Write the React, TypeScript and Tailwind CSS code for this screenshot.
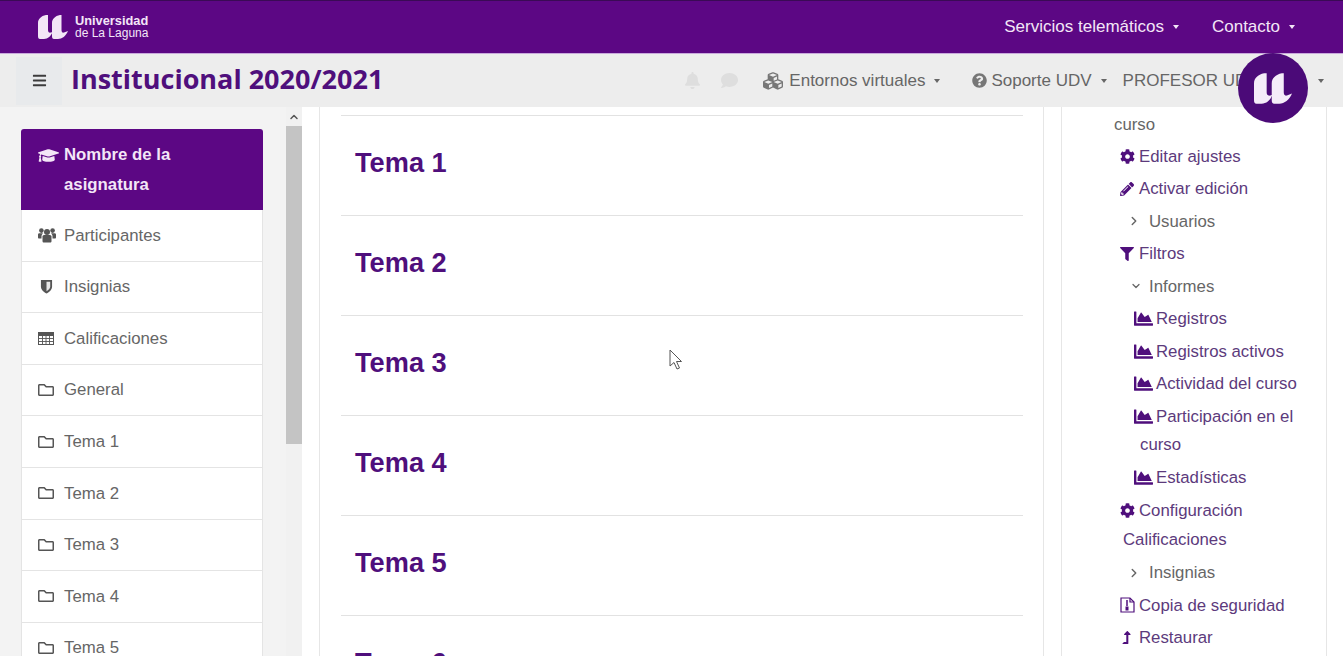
import type { ReactNode } from 'react';
import {
  FaBell,
  FaComment,
  FaCubes,
  FaQuestionCircle,
  FaBars,
  FaGraduationCap,
  FaRegFolder,
  FaCog,
  FaPencilAlt,
  FaFilter,
  FaChartArea,
  FaLevelUpAlt,
} from 'react-icons/fa';
import { LuChevronRight, LuChevronDown, LuChevronUp } from 'react-icons/lu';

function LogoMark({ className }: { className: string }) {
  return (
    <svg viewBox="0 0 30 24" className={className} fill="currentColor">
      <path d="M0 8 C0 4 3 1 8 0 L10 0 L10 15 C10 17 11 18 13 17.5 L14.5 17 C13 21 10 24 6 24 L2 24 C0.5 24 0 23 0 21 Z" />
      <path d="M14 8 C14 4 17 1 22 0 L23.5 0 L23.5 15 C23.5 17 24.5 18 26 17.5 L30 16 C28 21 24 24 20 24 L16 24 C14.5 24 14 23 14 21 Z" />
    </svg>
  );
}

function Caret() {
  return <span className="ml-[9px] inline-block h-0 w-0 border-x-[3.5px] border-t-[4px] border-x-transparent border-t-current" />;
}

function UsersIcon() {
  return (
    <svg viewBox="0 0 18 16" className="h-4 w-[18px]" fill="currentColor">
      <circle cx="9" cy="5" r="3" />
      <circle cx="3.4" cy="3.6" r="2.3" />
      <circle cx="14.6" cy="3.6" r="2.3" />
      <path d="M4.5 9.5 C4.5 8.5 5.5 8 6.5 8 L11.5 8 C12.5 8 13.500 8.500 13.500 9.500 L13.500 14 C13.500 15 13 15.500 12 15.500 L6 15.500 C5 15.500 4.500 15 4.500 14 Z" />
      <path d="M0 7.500 C0 6.800 0.800 6.300 1.500 6.300 L5 6.300 C4 7.300 3.500 8.300 3.500 9.500 L3.500 11.500 L1 11.500 C0.400 11.500 0 11 0 10.500 Z" />
      <path d="M18 7.500 C18 6.800 17.200 6.300 16.500 6.300 L13 6.300 C14 7.300 14.500 8.300 14.500 9.500 L14.500 11.500 L17 11.500 C17.600 11.500 18 11 18 10.500 Z" />
    </svg>
  );
}

function ShieldIcon() {
  return (
    <svg viewBox="0 0 14 16" className="ml-[2px] h-[15px] w-[13px]">
      <path d="M1 1 L13 1 L13 8 C13 11.500 10 14 7 15.500 C4 14 1 11.500 1 8 Z" fill="#555" />
      <path d="M7 3 L11 3 L11 8 C11 10.300 9 11.900 7 13 Z" fill="#e8e8e8" />
    </svg>
  );
}

function TableIcon() {
  return (
    <svg viewBox="0 0 16 13" className="mt-[1px] h-[13px] w-4" fill="none" stroke="currentColor">
      <rect x="0.500" y="0.500" width="15" height="12" fill="none" />
      <rect x="0.500" y="0.500" width="15" height="3" fill="currentColor" />
      <path d="M0.500 6.500 H15.500 M0.500 9.500 H15.500 M4.500 3.500 V12.500 M8 3.500 V12.500 M11.500 3.500 V12.500" strokeWidth="0.900" />
    </svg>
  );
}

function ArchiveIcon() {
  return (
    <svg viewBox="0 0 15 16" className="h-4 w-[15px]" fill="none" stroke="currentColor" strokeWidth="1.200">
      <path d="M1 1 L10 1 L14 5 L14 15 L1 15 Z" />
      <path d="M10 1 L10 5 L14 5" />
      <path d="M7 3 L7 9" strokeWidth="1.500" />
      <rect x="5.500" y="9.500" width="3" height="4" fill="currentColor" stroke="none" />
    </svg>
  );
}

const folder = <FaRegFolder className="h-4 w-4" />;

const sideItems: { label: string; icon: ReactNode }[] = [
  { label: 'Participantes', icon: <UsersIcon /> },
  { label: 'Insignias', icon: <ShieldIcon /> },
  { label: 'Calificaciones', icon: <TableIcon /> },
  { label: 'General', icon: folder },
  { label: 'Tema 1', icon: folder },
  { label: 'Tema 2', icon: folder },
  { label: 'Tema 3', icon: folder },
  { label: 'Tema 4', icon: folder },
  { label: 'Tema 5', icon: folder },
];

function Sidebar() {
  return (
    <aside className="flex w-[286px] shrink-0 flex-col bg-[#f3f3f3] pl-[21px] pt-[22px]">
      <div className="w-[242px]">
        <div className="flex h-[81px] rounded-t-[3px] bg-[#5c0784] pl-[17px] pt-[11px] text-[16.8px] font-bold leading-[30px] text-[#f3e6f7]">
          <FaGraduationCap className="mr-[5px] mt-[6px] h-[19px] w-[21px] shrink-0" />
          <span className="w-[140px]">Nombre de la asignatura</span>
        </div>
        {sideItems.map((item) => (
          <div
            key={item.label}
            className="flex h-[51.6px] items-center border-x border-b border-[#e4e4e4] bg-white pl-[16px] text-[16.8px] text-[#666666]"
          >
            <span className="flex w-[26px] shrink-0 text-[#555555]">{item.icon}</span>
            {item.label}
          </div>
        ))}
      </div>
    </aside>
  );
}

function Scrollbar() {
  return (
    <div className="flex w-[16px] shrink-0 flex-col bg-[#f1f1f1]">
      <div className="flex h-[19px] items-center justify-center text-[#555555]">
        <LuChevronUp className="h-3 w-3" strokeWidth={3} />
      </div>
      <div className="h-[318px] bg-[#c4c4c4]" />
    </div>
  );
}

function Course() {
  const temas = ['Tema 1', 'Tema 2', 'Tema 3', 'Tema 4', 'Tema 5', 'Tema 6'];
  return (
    <div className="flex min-w-0 flex-1 justify-start bg-white pl-[17px]">
      <section className="w-[726px] border-x border-[#e6e6e6] pl-[21px] pr-[20px] pt-[8px]">
        {temas.map((t) => (
          <div key={t} className="h-[100px] border-t border-[#e2e2e2] pl-[14px] pt-[29px] text-[27.2px] font-bold leading-[36px] text-[#4f0f7c]">
            {t}
          </div>
        ))}
      </section>
    </div>
  );
}

function AdminLink({ icon, children, className = '' }: { icon: ReactNode; children: ReactNode; className?: string }) {
  return (
    <div className={`flex h-[32.5px] items-center text-[#5c3a7c] ${className}`}>
      <span className="flex w-[19px] shrink-0 text-[#4f0f7c]">{icon}</span>
      {children}
    </div>
  );
}

function Toggle({ open, children }: { open?: boolean; children: ReactNode }) {
  return (
    <div className="flex h-[32.5px] items-center pl-[16px] text-[#666666]">
      <span className="flex w-[19px] shrink-0">
        {open ? (
          <LuChevronDown className="h-3 w-3" strokeWidth={2.5} />
        ) : (
          <LuChevronRight className="-ml-[3px] h-[14px] w-[14px]" strokeWidth={2.5} />
        )}
      </span>
      {children}
    </div>
  );
}

function Report({ children }: { children: ReactNode }) {
  return (
    <AdminLink className="pl-[20px] [&>span]:w-[22px]" icon={<FaChartArea className="h-[19px] w-[19px]" />}>
      {children}
    </AdminLink>
  );
}

function Admin() {
  const iconSize = 'h-[15px] w-[15px]';
  return (
    <div className="flex w-[299px] shrink-0 bg-white pl-[17px]">
      <section className="h-full w-[266px] border-x border-[#e6e6e6] pl-[52px] text-[16.8px]">
        <div className="h-[33px] pt-[5px] text-[#666666]">curso</div>
        <AdminLink className="pl-[6px]" icon={<FaCog className={iconSize} />}>Editar ajustes</AdminLink>
        <AdminLink className="pl-[6px]" icon={<FaPencilAlt className="h-[14px] w-[14px]" />}>Activar edición</AdminLink>
        <Toggle>Usuarios</Toggle>
        <AdminLink className="pl-[6px]" icon={<FaFilter className="h-[14px] w-[14px]" />}>Filtros</AdminLink>
        <Toggle open>Informes</Toggle>
        <Report>Registros</Report>
        <Report>Registros activos</Report>
        <Report>Actividad del curso</Report>
        <Report>Participación en el</Report>
        <div className="h-[29px] pl-[26px] leading-[24px] text-[#5c3a7c]">curso</div>
        <Report>Estadísticas</Report>
        <AdminLink className="pl-[6px]" icon={<FaCog className={iconSize} />}>Configuración</AdminLink>
        <div className="h-[30px] pl-[9px] leading-[26px] text-[#5c3a7c]">Calificaciones</div>
        <Toggle>Insignias</Toggle>
        <AdminLink className="pl-[6px]" icon={<ArchiveIcon />}>Copia de seguridad</AdminLink>
        <AdminLink className="pl-[6px]" icon={<FaLevelUpAlt className="h-[13px] w-[13px]" />}>Restaurar</AdminLink>
      </section>
    </div>
  );
}

export default function App() {
  return (
    <div className="relative flex h-[656px] w-[1343px] flex-col overflow-hidden bg-white font-['Liberation_Sans',sans-serif]">
      <header className="flex h-[54px] shrink-0 items-center justify-between border-y border-t-[#3a0a55] border-b-[#c9a9dc] bg-[#5c0784] pl-[38px] pr-[48px] text-[#f3e6f7]">
        <div className="flex items-center gap-[7px]">
          <LogoMark className="h-[24px] w-[30px]" />
          <div className="leading-[13px]">
            <div className="text-[12.8px] font-bold">Universidad</div>
            <div className="text-[12px]">de La Laguna</div>
          </div>
        </div>
        <nav className="flex items-center gap-[33px] text-[17px]">
          <span className="flex items-center">Servicios telemáticos<Caret /></span>
          <span className="flex items-center">Contacto<Caret /></span>
        </nav>
      </header>

      <div className="flex h-[53px] shrink-0 items-center bg-[#ededed] pl-[16px]">
        <button className="flex h-[48px] w-[46px] items-center justify-center bg-[#e8eaec] text-[#3c3c3c]">
          <FaBars className="h-[15px] w-[15px]" />
        </button>
        <h1 className="mb-[4px] ml-[9px] font-['Open_Sans',sans-serif] text-[27px] font-bold leading-none text-[#4f0f7c]">
          Institucional 2020/2021
        </h1>
        <div className="ml-[301px] flex items-center whitespace-nowrap text-[17px] text-[#666666]">
          <FaBell className="h-[17px] w-[17px] text-[#dedede]" />
          <FaComment className="ml-[20px] h-[17px] w-[17px] text-[#dedede]" />
          <span className="ml-[24px] flex items-center"><FaCubes className="mr-[5px] h-[20px] w-[22px] text-[#777777]" />Entornos virtuales<Caret /></span>
          <span className="ml-[32px] flex items-center"><FaQuestionCircle className="mr-[4px] h-[15px] w-[15px] text-[#777777]" />Soporte UDV<Caret /></span>
          <span className="ml-[16px] flex items-center"><span className="mr-[8px]">PROFESOR UDV 2020</span><Caret /></span>
        </div>
      </div>

      <main className="flex min-h-0 flex-1">
        <Sidebar />
        <Scrollbar />
        <Course />
        <Admin />
      </main>

      <div className="absolute left-[1238px] top-[53px] flex h-[70px] w-[70px] items-center justify-center rounded-full bg-[#4b0a78] text-[#f5ecf9]">
        <LogoMark className="h-[31px] w-[38px]" />
      </div>

      <svg viewBox="0 0 14 22" className="absolute left-[669px] top-[349px] h-[22px] w-[14px]">
        <path d="M1 1 L1 17 L5 13.5 L8 20 L10.5 19 L7.5 12.5 L12.5 12.5 Z" fill="#fff" stroke="#555" strokeWidth="1" />
      </svg>
    </div>
  );
}
